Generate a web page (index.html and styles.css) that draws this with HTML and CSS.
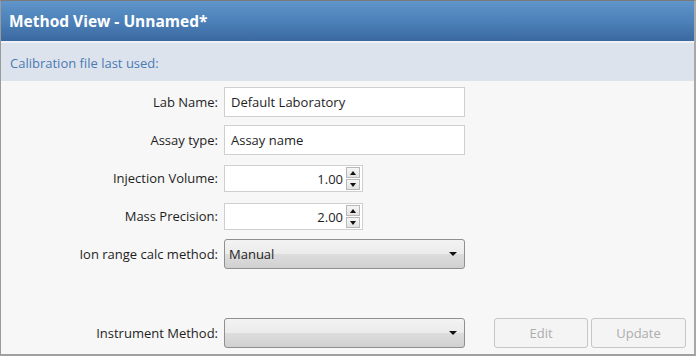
FILE: index.html
```html
<html>
<head>
    <title>Method View</title>
    <link rel="stylesheet" href="styles.css">
</head>
<body>
    <div class="window">
        <div class="titlebar">Method View - Unnamed*</div>
        <div class="calib">Calibration file last used:</div>

        <div class="form">
            <div class="row">
                <label>Lab Name:</label>
                <div class="textbox">Default Laboratory</div>
            </div>
            <div class="row">
                <label>Assay type:</label>
                <div class="textbox">Assay name</div>
            </div>
            <div class="row">
                <label>Injection Volume:</label>
                <div class="numeric">
                    <span class="value">1.00</span>
                    <span class="spin">
                        <span class="spin-btn"><span class="tri up"></span></span>
                        <span class="spin-btn"><span class="tri down"></span></span>
                    </span>
                </div>
            </div>
            <div class="row">
                <label>Mass Precision:</label>
                <div class="numeric">
                    <span class="value">2.00</span>
                    <span class="spin">
                        <span class="spin-btn"><span class="tri up"></span></span>
                        <span class="spin-btn"><span class="tri down"></span></span>
                    </span>
                </div>
            </div>
            <div class="row">
                <label>Ion range calc method:</label>
                <div class="combo">
                    <span>Manual</span>
                    <span class="tri down"></span>
                </div>
            </div>

            <div class="row bottom">
                <label>Instrument Method:</label>
                <div class="combo">
                    <span></span>
                    <span class="tri down"></span>
                </div>
                <div class="buttons">
                    <button class="edit" disabled>Edit</button>
                    <button disabled>Update</button>
                </div>
            </div>
        </div>
    </div>
</body>
</html>
```

FILE: styles.css
```css
body {
    margin: 0;
    padding: 0;
    font-family: "Open Sans", "Noto Sans", sans-serif;
    font-size: 13px;
    color: #1e1e1e;
    background-color: #fff;
}

.window {
    width: 696px;
    height: 356px;
    box-sizing: border-box;
    border-top: 1px solid #7a7a7a;
    border-left: 1px solid #9a9a9a;
    border-right: 2px solid #a8a8a8;
    border-bottom: 2px solid #a0a0a0;
    background-color: #f7f7f7;
    display: flex;
    flex-direction: column;
}

.titlebar {
    height: 40px;
    line-height: 40px;
    padding-left: 8px;
    background: linear-gradient(#5f95cb, #4b7fb7 55%, #3a689f);
    color: #fff;
    font-weight: bold;
    font-size: 15.5px;
    border-bottom: 2px solid #eef2f8;
}

.calib {
    height: 38px;
    line-height: 40px;
    padding-left: 9px;
    background-color: #dde3ed;
    color: #4a7ab3;
}

.form {
    flex: 1;
    display: flex;
    flex-direction: column;
    gap: 8px;
    padding-top: 6px;
}

.row {
    display: flex;
    align-items: center;
    height: 30px;
}

.row label {
    width: 217px;
    text-align: right;
    margin-right: 6px;
}

.row.bottom {
    margin-top: auto;
    margin-bottom: 6px;
}

.textbox {
    width: 233px;
    height: 28px;
    line-height: 28px;
    padding-left: 6px;
    background-color: #fff;
    border: 1px solid #cfcfcf;
}

.numeric {
    width: 137px;
    height: 25px;
    margin-top: 1px;
    background-color: #fff;
    border: 1px solid #cfcfcf;
    display: flex;
    align-items: center;
    justify-content: flex-end;
}

.numeric .value {
    margin-right: 3px;
}

.spin {
    display: flex;
    flex-direction: column;
    gap: 1px;
    margin-right: 2px;
}

.spin-btn {
    width: 12px;
    height: 9px;
    border: 1px solid #b9b9b9;
    background: linear-gradient(#f6f6f6, #e2e2e2);
    display: flex;
    align-items: center;
    justify-content: center;
}

.tri {
    width: 0;
    height: 0;
    border-left: 4px solid transparent;
    border-right: 4px solid transparent;
}

.tri.up {
    border-bottom: 4px solid #111;
}

.tri.down {
    border-top: 4px solid #111;
}

.spin-btn .tri {
    border-left-width: 3px;
    border-right-width: 3px;
}

.combo {
    width: 228px;
    height: 28px;
    padding: 0 7px 0 4px;
    border: 1px solid #8e8f8f;
    border-radius: 3px;
    background: linear-gradient(#f3f3f3, #ebebeb 50%, #dddddd 51%, #d0d0d0);
    display: flex;
    align-items: center;
    justify-content: space-between;
}

.buttons {
    display: flex;
    gap: 3px;
    margin-left: 29px;
}

.buttons button {
    width: 95px;
    height: 30px;
    font-family: inherit;
    font-size: 13px;
    color: #adadad;
    background-color: #f4f4f4;
    border: 1px solid #c6c6c6;
    border-radius: 3px;
}

.buttons button.edit {
    width: 94px;
}
```
